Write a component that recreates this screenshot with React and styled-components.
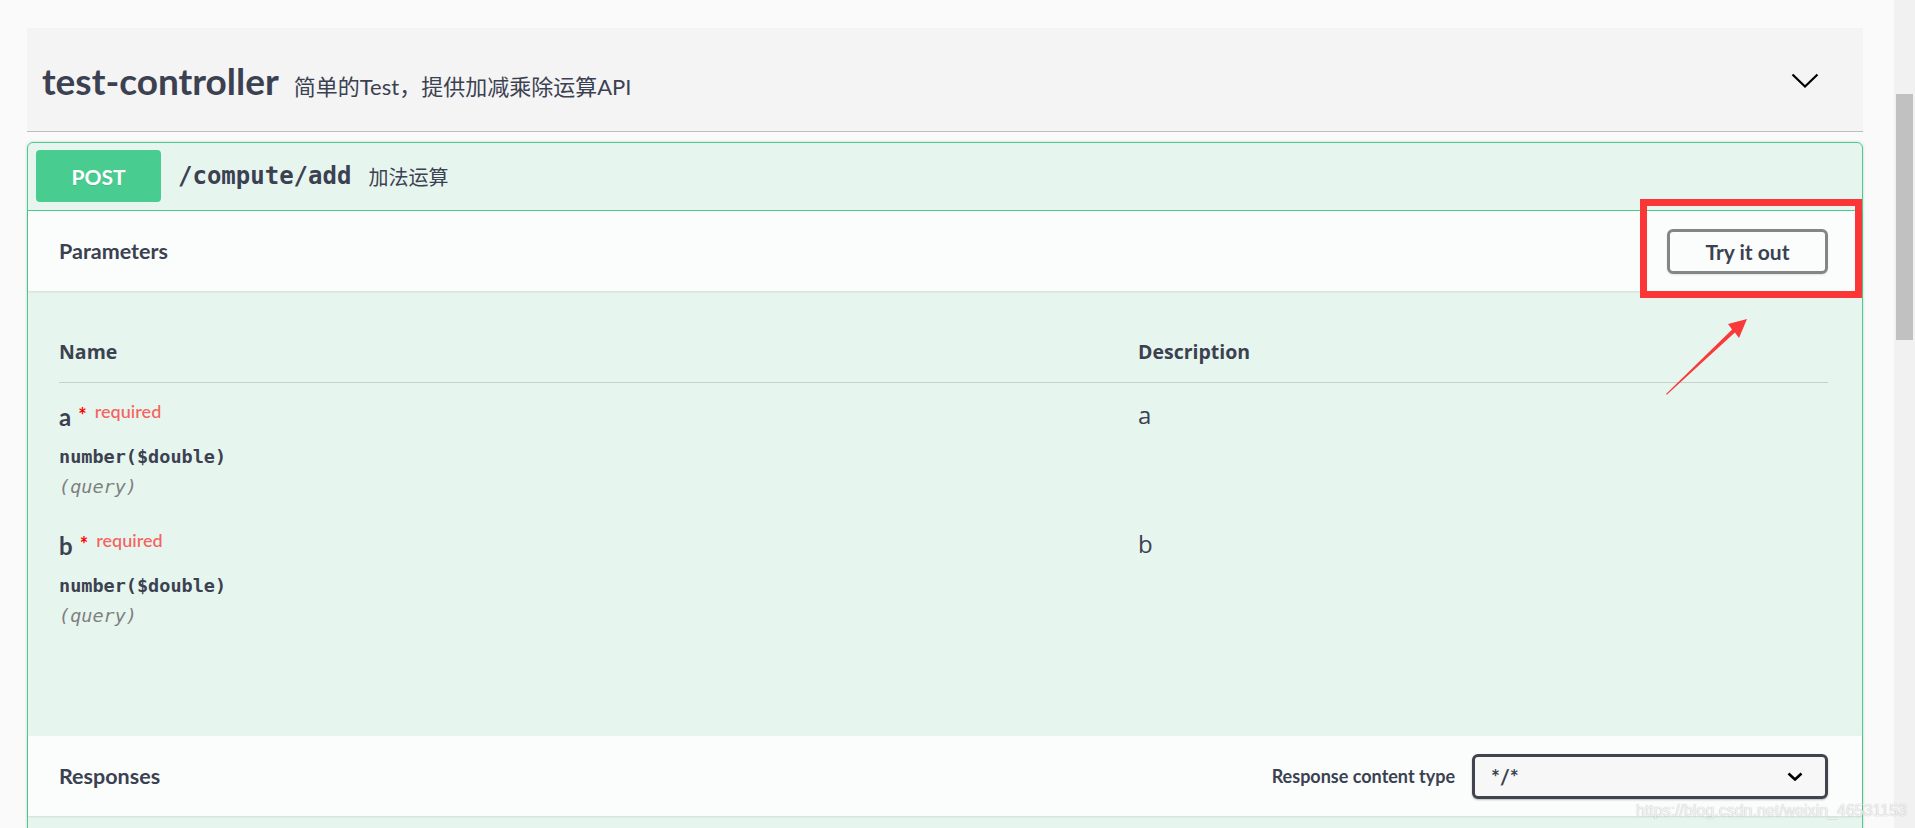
import React from "react";
import styled, { createGlobalStyle } from "styled-components";

const GlobalStyle = createGlobalStyle`
  html, body { margin: 0; padding: 0; background: #fafafa; }
  body {
    font-family: Lato, "Noto Sans CJK SC", sans-serif;
    color: #3b4151;
    overflow: hidden;
  }
  * { box-sizing: border-box; }
`;

const Page = styled.div`
  position: relative;
  display: flex;
  width: 100%;
  height: 828px;
  overflow: hidden;
`;

const Main = styled.main`
  flex: 1;
  min-width: 0;
  padding: 28px 31px 0 27px;
`;

const ScrollTrack = styled.div`
  width: 21px;
  flex: none;
  background: #f1f1f1;
  padding: 94px 2px 0 2px;
`;

const ScrollThumb = styled.div`
  height: 246px;
  background: #c1c1c1;
`;

const TagHeader = styled.div`
  display: flex;
  align-items: center;
  justify-content: space-between;
  height: 104px;
  padding: 2px 44px 0 15px;
  background: #f4f4f4;
  border-bottom: 1px solid rgba(59, 65, 81, 0.3);
`;

const TagTitle = styled.div`
  display: flex;
  align-items: baseline;
  gap: 15px;
`;

const TagName = styled.span`
  font-family: Lato, sans-serif;
  font-weight: 700;
  font-size: 37px;
  color: #3b4151;
`;

const TagDesc = styled.small`
  font-family: Lato, "Noto Sans CJK SC", sans-serif;
  font-weight: 400;
  font-size: 22px;
  color: #3b4151;
`;

const Opblock = styled.div`
  margin-top: 10px;
  border: 1px solid #49cc90;
  border-radius: 6px;
  background: rgba(73, 204, 144, 0.1);
  box-shadow: 0 0 3px rgba(0, 0, 0, 0.19);
`;

const Summary = styled.div`
  display: flex;
  align-items: center;
  padding: 7px 8px 8px 8px;
  border-bottom: 1px solid #49cc90;
`;

const MethodBadge = styled.span`
  display: flex;
  align-items: center;
  justify-content: center;
  width: 125px;
  height: 52px;
  border-radius: 4px;
  background: #49cc90;
  color: #fff;
  font-family: Lato, sans-serif;
  font-weight: 700;
  font-size: 21px;
  text-shadow: 0 1px 0 rgba(0, 0, 0, 0.1);
`;

const Path = styled.span`
  margin-left: 17px;
  font-family: "DejaVu Sans Mono", monospace;
  font-weight: 700;
  font-size: 24px;
  color: #3b4151;
`;

const OpDesc = styled.span`
  margin-left: 17px;
  font-family: "Noto Sans CJK SC", sans-serif;
  font-size: 20px;
  color: #3b4151;
`;

const SectionHeader = styled.div`
  display: flex;
  align-items: center;
  justify-content: space-between;
  height: 80px;
  padding: 0 34px 0 31px;
  background: rgba(255, 255, 255, 0.8);
  box-shadow: 0 1px 2px rgba(0, 0, 0, 0.1);
`;

const SectionTitle = styled.h4`
  margin: 0;
  font-family: Lato, sans-serif;
  font-weight: 700;
  font-size: 21.5px;
  color: #3b4151;
`;

const TryButton = styled.button`
  width: 161px;
  height: 45px;
  padding: 0;
  border: 3px solid #858585;
  border-radius: 6px;
  background: transparent;
  box-shadow: 0 1px 2px rgba(0, 0, 0, 0.1);
  font-family: Lato, sans-serif;
  font-weight: 700;
  font-size: 21px;
  color: #3b4151;
`;

const TableContainer = styled.div`
  padding: 30px 34px 95px 31px;
`;

const ParamGrid = styled.div`
  display: grid;
  grid-template-columns: 1079px 1fr;
`;

const Th = styled.div`
  font-family: "Open Sans", sans-serif;
  font-weight: 700;
  font-size: 19.5px;
  line-height: 26px;
  padding: 18px 0 17px;
  border-bottom: 1px solid rgba(59, 65, 81, 0.2);
  color: #3b4151;
`;

const Cell = styled.div`
  padding: 15px 0 12px;
`;

const ParamName = styled.div`
  font-family: Lato, sans-serif;
  font-weight: 700;
  font-size: 24px;
  line-height: 38px;
  color: #3b4151;
`;

const Star = styled.span`
  margin-left: 7px;
  color: #ff0000;
  font-size: 20px;
  line-height: 1;
  vertical-align: 3px;
`;

const Required = styled.span`
  margin-left: 8px;
  color: rgba(255, 0, 0, 0.6);
  font-family: Lato, sans-serif;
  font-weight: 600;
  font-size: 18px;
  line-height: 1;
  vertical-align: 8px;
`;

const ParamType = styled.div`
  margin-top: 8px;
  font-family: "DejaVu Sans Mono", monospace;
  font-weight: 700;
  font-size: 18.5px;
  line-height: 26px;
  color: #3b4151;
`;

const ParamIn = styled.div`
  margin-top: 4px;
  font-family: "DejaVu Sans Mono", monospace;
  font-style: italic;
  font-size: 18.5px;
  line-height: 26px;
  color: #808080;
`;

const DescText = styled.div`
  font-family: "Open Sans", sans-serif;
  font-size: 24px;
  line-height: 34px;
  color: #3b4151;
`;

const ControlGroup = styled.div`
  display: flex;
  align-items: center;
  gap: 17px;
`;

const ControlLabel = styled.label`
  font-family: Lato, sans-serif;
  font-weight: 700;
  font-size: 18px;
  color: #3b4151;
`;

const SelectBox = styled.div`
  display: flex;
  align-items: center;
  justify-content: space-between;
  width: 356px;
  height: 45px;
  padding: 0 22px 0 16px;
  border: 3px solid #41444e;
  border-radius: 6px;
  background: #f7f7f7;
  box-shadow: 0 1px 2px rgba(0, 0, 0, 0.25);
  font-family: Lato, sans-serif;
  font-weight: 700;
  font-size: 21px;
  color: #3b4151;
`;

const ResponsesBody = styled.div`
  height: 120px;
`;

const Highlight = styled.div`
  position: absolute;
  left: 1640px;
  top: 199px;
  width: 222px;
  height: 99px;
  border: 7px solid #fa3636;
  pointer-events: none;
`;

const ArrowSvg = styled.svg`
  position: absolute;
  left: 1660px;
  top: 314px;
  pointer-events: none;
`;

const Watermark = styled.div`
  position: absolute;
  left: 1636px;
  top: 801px;
  font-family: "Liberation Sans", Arial, sans-serif;
  font-size: 16px;
  line-height: 20px;
  color: rgba(255, 255, 255, 0.85);
  text-shadow: 0 0 1px rgba(0, 0, 0, 0.35);
  white-space: nowrap;
  pointer-events: none;
`;

const Chevron = () => (
  <svg width="28" height="15" viewBox="0 0 28 15">
    <polyline points="1.5,1.5 14,13.5 26.5,1.5" fill="none" stroke="#000" strokeWidth="2.2" />
  </svg>
);

const SmallChevron = () => (
  <svg width="16" height="9" viewBox="0 0 16 9">
    <polyline points="1.5,1.5 8,7.5 14.5,1.5" fill="none" stroke="#000" strokeWidth="2.6" />
  </svg>
);

const params = [
  { name: "a", type: "number($double)", where: "(query)", desc: "a" },
  { name: "b", type: "number($double)", where: "(query)", desc: "b" },
];

export default function App() {
  return (
    <>
      <GlobalStyle />
      <Page>
        <Main>
          <TagHeader>
            <TagTitle>
              <TagName>test-controller</TagName>
              <TagDesc>简单的Test，提供加减乘除运算API</TagDesc>
            </TagTitle>
            <Chevron />
          </TagHeader>

          <Opblock>
            <Summary>
              <MethodBadge>POST</MethodBadge>
              <Path>/compute/add</Path>
              <OpDesc>加法运算</OpDesc>
            </Summary>

            <SectionHeader>
              <SectionTitle>Parameters</SectionTitle>
              <TryButton>Try it out</TryButton>
            </SectionHeader>

            <TableContainer>
              <ParamGrid>
                <Th>Name</Th>
                <Th>Description</Th>
                {params.map((p) => (
                  <React.Fragment key={p.name}>
                    <Cell>
                      <ParamName>
                        {p.name}
                        <Star>*</Star>
                        <Required>required</Required>
                      </ParamName>
                      <ParamType>{p.type}</ParamType>
                      <ParamIn>{p.where}</ParamIn>
                    </Cell>
                    <Cell>
                      <DescText>{p.desc}</DescText>
                    </Cell>
                  </React.Fragment>
                ))}
              </ParamGrid>
            </TableContainer>

            <SectionHeader>
              <SectionTitle>Responses</SectionTitle>
              <ControlGroup>
                <ControlLabel>Response content type</ControlLabel>
                <SelectBox>
                  <span>*/*</span>
                  <SmallChevron />
                </SelectBox>
              </ControlGroup>
            </SectionHeader>
            <ResponsesBody />
          </Opblock>
        </Main>
        <ScrollTrack>
          <ScrollThumb />
        </ScrollTrack>

        <Highlight />
        <ArrowSvg width="95" height="90" viewBox="0 0 95 90">
          <polygon
            points="6,80 72.1,15.5 68,10 87,5 79,24 74.9,18.5 6.8,80.8"
            fill="#fa3a3a"
          />
        </ArrowSvg>
        <Watermark>https://blog.csdn.net/weixin_46531153</Watermark>
      </Page>
    </>
  );
}
